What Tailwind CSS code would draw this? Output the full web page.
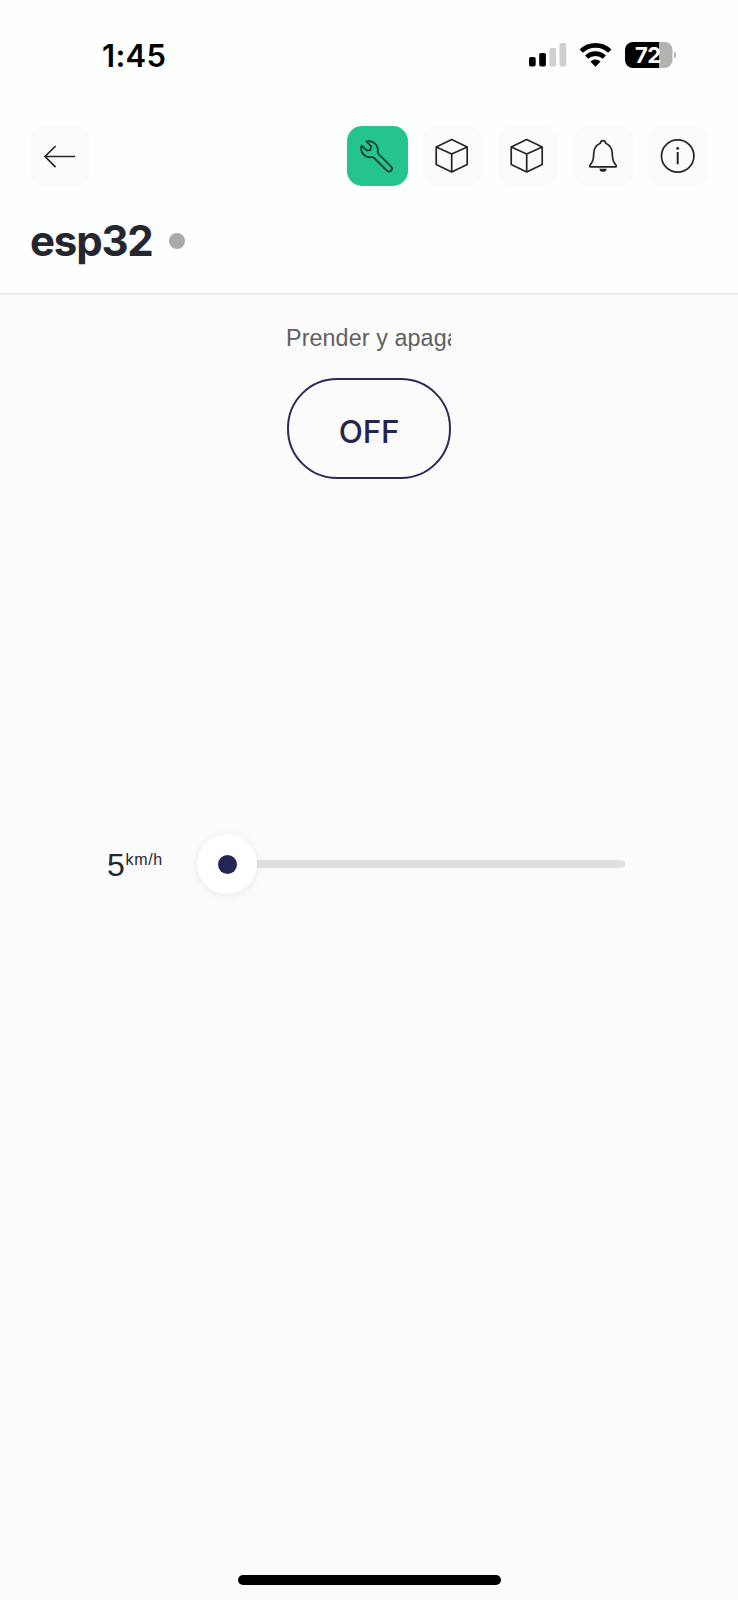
<!DOCTYPE html>
<html lang="es">
<head>
<meta charset="utf-8">
<title>esp32</title>
<script src="https://cdn.jsdelivr.net/npm/@tailwindcss/browser@4"></script>
</head>
<body class="bg-[#fbfbfb]">
<div class="flex h-[1600px] w-[738px] flex-col overflow-hidden font-['Inter','Liberation_Sans',sans-serif] text-[#26262e]">
  <header class="h-[295px] shrink-0 border-b-2 border-[#edefef] bg-[#fdfefe]">
    <div class="flex h-[126px] items-start pt-[36px] pl-[102px] pr-[62px]">
      <div class="pt-px text-[31px] leading-[38px] font-semibold tracking-[0.3px] text-black">1:45</div>
      <svg class="ml-auto" width="150" height="38" viewBox="526 36 150 38">
        <g fill="#000"><rect x="529" y="57" width="6.7" height="9.6" rx="1.8"/><rect x="539.2" y="53" width="6.7" height="13.6" rx="1.8"/></g>
        <g fill="#cfcfcf"><rect x="549.4" y="48" width="6.7" height="18.6" rx="1.8"/><rect x="559.5" y="43" width="6.7" height="23.6" rx="1.8"/></g>
        <g fill="none" stroke="#000" stroke-width="4.6"><path d="M581.2 51.2a20.5 20.5 0 0 1 28.6 0"/><path d="M586.6 57.200a12.8 12.8 0 0 1 17.8 0"/></g>
        <path d="M590.8 61.6a7 7 0 0 1 9.4 0L595.5 66.4z" fill="#000" stroke="#000" stroke-width="0.6"/>
        <path d="M659 42h5.500a8 8 0 0 1 8 8v10a8 8 0 0 1-8 8H659z" fill="#b3b3b3"/>
        <path d="M659 42h-26a8 8 0 0 0-8 8v10a8 8 0 0 0 8 8h26z" fill="#000"/>
        <path d="M674 51.500q2.300 1 2.300 3.500t-2.300 3.500z" fill="#b3b3b3"/>
        <text x="635" y="62.700" font-size="22" font-weight="700" letter-spacing="-0.6" fill="#fff">72</text>
      </svg>
    </div>
    <nav class="flex gap-[15px] px-[30px]">
      <div class="mr-auto size-[60px] rounded-[15px] bg-[#fbfbfb]">
        <svg width="60" height="60" fill="none" stroke="#26262a" stroke-width="1.700"><path d="M45.200 30.500H15M25.600 20 15 30.500l10.600 10.700"/></svg>
      </div>
      <div class="h-[60px] w-[61px] rounded-[15px] bg-[#25c48f]">
        <svg width="60" height="60" fill="none" stroke="#12392d" stroke-width="1.700" stroke-linejoin="round"><path d="M14.500 19.600 19.800 24.400 23.400 24.200 24.200 20.200 19.400 15.500C25 14 31.500 18 30.800 25.500Q30.700 27 31.500 28L44.200 40.500C46.800 43.400 42.800 47.300 39.900 44.700L27 31.800Q26.200 31 24.800 31.200C17.500 32 12.800 26 14.500 19.600Z"/></svg>
      </div>
      <div class="size-[60px] rounded-[15px] bg-[#fbfbfb]">
        <svg width="60" height="60" fill="none" stroke="#26262a" stroke-width="1.700" stroke-linejoin="round"><path d="M28.700 13.600 44.200 21v17.600L28.700 46 13.200 38.600V21zM13.200 21 28.700 28 44.200 21M28.700 28V46"/></svg>
      </div>
      <div class="size-[60px] rounded-[15px] bg-[#fbfbfb]">
        <svg width="60" height="60" fill="none" stroke="#26262a" stroke-width="1.700" stroke-linejoin="round"><path d="M28.700 13.600 44.200 21v17.600L28.700 46 13.200 38.600V21zM13.200 21 28.700 28 44.200 21M28.700 28V46"/></svg>
      </div>
      <div class="size-[60px] rounded-[15px] bg-[#fbfbfb]">
        <svg width="60" height="60" fill="none" stroke="#26262a" stroke-width="1.700" stroke-linejoin="round"><path d="M27.300 17.200Q27.900 14.600 30 14.600T32.700 17.200C36.800 19 39 22 39.200 26.500C39.300 34 40.500 36 43 39.200Q43.700 40.800 42.500 40.800H17.500Q16.300 40.800 17 39.200C19.500 36 20.700 34 20.800 26.500C21 22 23.200 19 27.300 17.200Z"/><path d="M26.400 42.800h7.200q-.4 3-2.600 3h-2q-2.200 0-2.600-3z" fill="#26262a" stroke="none"/></svg>
      </div>
      <div class="size-[60px] rounded-[15px] bg-[#fbfbfb]">
        <svg width="60" height="60" fill="none" stroke="#26262a" stroke-width="1.700"><circle cx="29.700" cy="30" r="16.200"/><path d="M29.700 26v12.300" stroke-width="2"/><circle cx="29.700" cy="22.400" r="1.400" fill="#26262a" stroke="none"/></svg>
      </div>
    </nav>
    <div class="flex items-center gap-[17px] pt-[29px] pl-[30px]">
      <h1 class="w-[122px] text-[42px] leading-[52px] font-bold tracking-[-1.2px]">esp32</h1>
      <span class="size-[15.500px] shrink-0 rounded-full bg-[#a9a9a9]"></span>
    </div>
  </header>
  <main class="flex grow flex-col">
    <section class="mx-auto w-[164px] pt-[28px]">
      <div class="overflow-hidden font-['Liberation_Sans',sans-serif] text-[23.300px] leading-[30px] tracking-[0.1px] -indent-px whitespace-nowrap text-[#616161]">Prender y apagar</div>
      <button class="mt-[25px] flex h-[101px] w-[164px] items-center justify-center rounded-[50px] border-2 border-[#2a2a58] pt-[7px] text-[31.500px] font-medium tracking-[-0.3px] text-[#24244f]">OFF</button>
    </section>
    <section class="mt-[355px] flex h-[60px] items-center pl-[107px]">
      <div class="flex w-[90px] items-start pt-[2px] font-['Liberation_Sans',sans-serif] text-[32px] leading-[38px]"><span class="w-[18.500px]">5</span><span class="text-[16px] leading-[28px] tracking-[0.7px]">km/h</span></div>
      <div class="z-10 flex size-[60px] items-center justify-center rounded-full bg-white shadow-[0_1px_8px_rgba(0,0,0,0.08)]"><span class="size-[19px] rounded-full bg-[#242556]"></span></div>
      <div class="-ml-1 h-[7.500px] w-[372px] rounded-r-full bg-[#e0e0e0]"></div>
    </section>
    <div class="mx-auto mt-auto mb-[15px] h-[10px] w-[263px] rounded-full bg-black"></div>
  </main>
</div>
</body>
</html>
